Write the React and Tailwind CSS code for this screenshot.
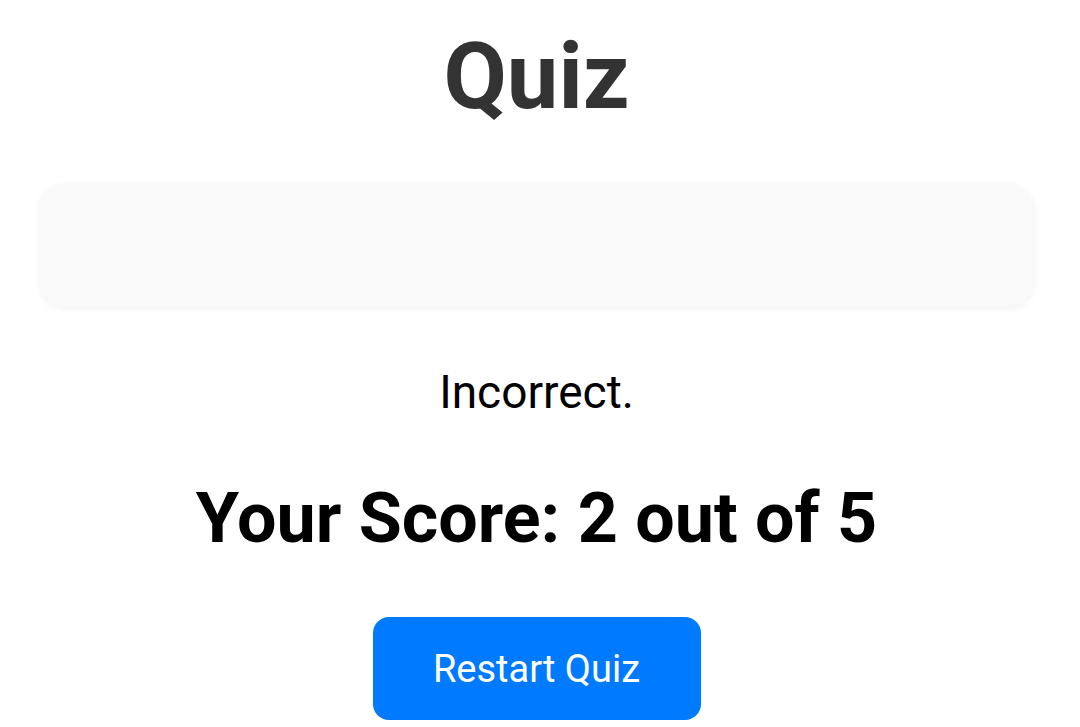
const App = () => {
  return (
    <div
      className="min-h-[727px] bg-white pl-[40px] pr-[47px] pt-[31px] flex flex-col items-center"
      style={{ fontFamily: "Roboto, 'Noto Sans', sans-serif" }}
    >
      <h1 className="text-[92px] leading-[92px] font-bold text-[#333333]">Quiz</h1>

      {/* empty question card */}
      <div className="mt-[62px] w-full h-[122px] rounded-[26px] bg-[#f9f9f9] shadow-[0_1px_8px_rgba(0,0,0,0.07)]" />

      <p className="mt-[62px] text-[46px] leading-[46px] text-black">Incorrect.</p>

      <h2 className="mt-[68px] text-[70px] leading-[70px] font-bold text-black">
        Your Score: 2 out of 5
      </h2>

      <button className="mt-[64px] w-[328px] h-[103px] rounded-[16px] bg-[#007bff] text-white text-[38px] leading-[38px] flex items-center justify-center">
        Restart Quiz
      </button>
    </div>
  );
};

export default App;
